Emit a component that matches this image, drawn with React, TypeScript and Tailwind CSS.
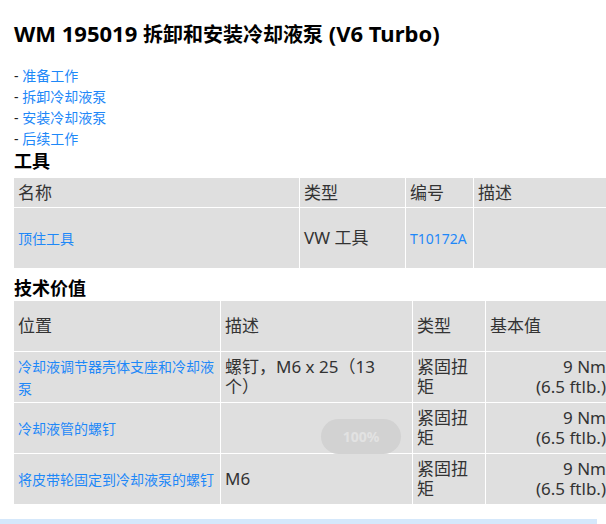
import React from "react";

const FONT = '"Noto Sans", "Noto Sans CJK SC", sans-serif';

const navLinks = ["准备工作", "拆卸冷却液泵", "安装冷却液泵", "后续工作"];

function Link({ children }: { children: React.ReactNode }) {
  return <span className="text-[14px] leading-[21px] text-[#1e88f8]">{children}</span>;
}

const rows2 = [
  { pos: "冷却液调节器壳体支座和冷却液泵", desc: "螺钉，M6 x 25（13\n个）" },
  { pos: "冷却液管的螺钉", desc: "" },
  { pos: "将皮带轮固定到冷却液泵的螺钉", desc: "M6" },
];

export default function App() {
  return (
    <div
      className="relative w-[606px] h-[524px] overflow-hidden bg-white text-[#333]"
      style={{ fontFamily: FONT }}
    >
      <div className="pl-[14px]">
        <h1 className="pt-[19px] h-[49px] text-[20px] leading-[28px] font-bold text-black">
          <span className="text-[22px]">WM 195019 </span>拆卸和安装冷却液泵
          <span className="text-[22px]"> (V6 Turbo)</span>
        </h1>
        <div className="mt-[16px] flex flex-col">
          {navLinks.map((l) => (
            <div key={l} className="text-[14px] leading-[21px] text-[#222]">
              - <Link>{l}</Link>
            </div>
          ))}
        </div>
        <h2 className="text-[18px] leading-[24px] font-bold text-black">工具</h2>
        <table className="mt-[4px] -ml-[1px] table-fixed border-separate [border-spacing:1px] w-[598px] text-[17px]">
          <colgroup>
            <col className="w-[285px]" />
            <col className="w-[105px]" />
            <col className="w-[67px]" />
            <col className="w-[136px]" />
          </colgroup>
          <tbody>
            <tr className="h-[29px]">
              <td className="bg-[#dfdfdf] px-[4px] align-middle leading-[20px]">名称</td>
              <td className="bg-[#dfdfdf] px-[4px] align-middle leading-[20px]">类型</td>
              <td className="bg-[#dfdfdf] px-[4px] align-middle leading-[20px]">编号</td>
              <td className="bg-[#dfdfdf] px-[4px] align-middle leading-[20px]">描述</td>
            </tr>
            <tr className="h-[60px]">
              <td className="bg-[#dfdfdf] px-[4px] align-middle">
                <Link>顶住工具</Link>
              </td>
              <td className="bg-[#dfdfdf] px-[4px] align-middle leading-[20px]">VW 工具</td>
              <td className="bg-[#dfdfdf] px-[4px] align-middle">
                <Link>T10172A</Link>
              </td>
              <td className="bg-[#dfdfdf] px-[4px] align-middle"></td>
            </tr>
          </tbody>
        </table>
        <h2 className="mt-[7px] text-[18px] leading-[24px] font-bold text-black">技术价值</h2>
        <table className="-ml-[1px] table-fixed border-separate [border-spacing:1px] w-[598px] text-[17px]">
          <colgroup>
            <col className="w-[206px]" />
            <col className="w-[191px]" />
            <col className="w-[72px]" />
            <col className="w-[124px]" />
          </colgroup>
          <tbody>
            <tr className="h-[50px]">
              <td className="bg-[#dfdfdf] px-[4px] align-middle leading-[20px]">位置</td>
              <td className="bg-[#dfdfdf] px-[4px] align-middle leading-[20px]">描述</td>
              <td className="bg-[#dfdfdf] px-[4px] align-middle leading-[20px]">类型</td>
              <td className="bg-[#dfdfdf] px-[4px] align-middle leading-[20px]">基本值</td>
            </tr>
            {rows2.map((r) => (
              <tr key={r.pos} className="h-[50px]">
                <td className="bg-[#dfdfdf] px-[4px] align-middle leading-[21px]">
                  <Link>{r.pos}</Link>
                </td>
                <td className="bg-[#dfdfdf] px-[4px] align-middle leading-[20px] whitespace-pre-line">
                  {r.desc}
                </td>
                <td className="bg-[#dfdfdf] px-[4px] align-middle leading-[20px]">紧固扭矩</td>
                <td className="bg-[#dfdfdf] px-[4px] align-middle leading-[20px] text-right">
                  <div>9 Nm</div>
                  <div>(6.5 ftlb.)</div>
                </td>
              </tr>
            ))}
          </tbody>
        </table>
      </div>
      <div className="mt-[14px] h-[5px] w-[597px] bg-[#d5e8fb]" />
      <div className="absolute left-[321px] top-[419px] w-[80px] h-[35px] rounded-full bg-[#d2d2d2] flex items-center justify-center text-[14px] font-bold text-[#e2e2e2]">
        100%
      </div>
    </div>
  );
}
